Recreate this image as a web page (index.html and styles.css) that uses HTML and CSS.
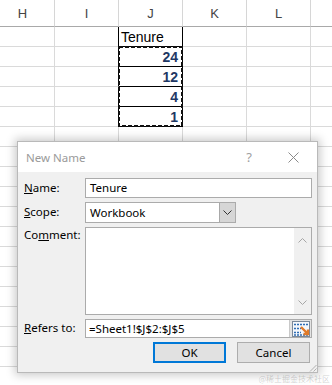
FILE: index.html
```html
<!DOCTYPE html>
<html lang="en">

<head>
    <meta charset="UTF-8">
    <meta name="viewport" content="width=device-width, initial-scale=1.0">
    <title>New Name</title>
    <link rel="stylesheet" href="styles.css">
</head>

<body>
    <!-- sheet grid -->
    <div class="sheet">
        <div class="head">H</div>
        <div class="head">I</div>
        <div class="head">J</div>
        <div class="head">K</div>
        <div class="head">L</div>
        <div class="head"></div>

        <div class="cell"></div>
        <div class="cell edge"></div>
        <div class="cell title-cell">Tenure</div>
        <div class="cell"></div>
        <div class="cell"></div>
        <div class="cell"></div>

        <div class="cell"></div>
        <div class="cell edge"></div>
        <div class="pick">
            <div class="num">24</div>
            <div class="num">12</div>
            <div class="num">4</div>
            <div class="num">1</div>
            <svg class="ants" width="65" height="81" viewBox="0 0 65 81">
                <rect x="1" y="1" width="63" height="79" fill="none" stroke="#111" stroke-width="2" stroke-dasharray="4 2"/>
            </svg>
        </div>
        <div class="cell"></div>
        <div class="cell"></div>
        <div class="cell"></div>

        <div class="cell"></div>
        <div class="cell edge"></div>
        <div class="cell"></div>
        <div class="cell"></div>
        <div class="cell"></div>

        <div class="cell"></div>
        <div class="cell edge"></div>
        <div class="cell"></div>
        <div class="cell"></div>
        <div class="cell"></div>

        <div class="cell"></div>
        <div class="cell edge"></div>
        <div class="cell"></div>
        <div class="cell"></div>
        <div class="cell"></div>

        <!-- empty rows under the dialog -->
        <div class="cell"></div><div class="cell"></div><div class="cell"></div><div class="cell"></div><div class="cell"></div><div class="cell"></div>
        <div class="cell"></div><div class="cell"></div><div class="cell"></div><div class="cell"></div><div class="cell"></div><div class="cell"></div>
        <div class="cell"></div><div class="cell"></div><div class="cell"></div><div class="cell"></div><div class="cell"></div><div class="cell"></div>
        <div class="cell"></div><div class="cell"></div><div class="cell"></div><div class="cell"></div><div class="cell"></div><div class="cell"></div>
        <div class="cell"></div><div class="cell"></div><div class="cell"></div><div class="cell"></div><div class="cell"></div><div class="cell"></div>
        <div class="cell"></div><div class="cell"></div><div class="cell"></div><div class="cell"></div><div class="cell"></div><div class="cell"></div>
        <div class="cell"></div><div class="cell"></div><div class="cell"></div><div class="cell"></div><div class="cell"></div><div class="cell"></div>
        <div class="cell"></div><div class="cell"></div><div class="cell"></div><div class="cell"></div><div class="cell"></div><div class="cell"></div>
        <div class="cell"></div><div class="cell"></div><div class="cell"></div><div class="cell"></div><div class="cell"></div><div class="cell"></div>
        <div class="cell"></div><div class="cell"></div><div class="cell"></div><div class="cell"></div><div class="cell"></div><div class="cell"></div>
        <div class="cell"></div><div class="cell"></div><div class="cell"></div><div class="cell"></div><div class="cell"></div><div class="cell"></div>
        <div class="cell"></div><div class="cell"></div><div class="cell"></div><div class="cell"></div><div class="cell"></div><div class="cell"></div>
    </div>

    <!-- New Name dialog -->
    <div class="dialog">
        <div class="dialog-title">
            <span class="caption">New Name</span>
            <span class="help">?</span>
            <svg class="close" width="11" height="11" viewBox="0 0 11 11">
                <path d="M0.5 0.5 L10.5 10.5 M10.5 0.5 L0.5 10.5" stroke="#8a8a8a" stroke-width="1"/>
            </svg>
        </div>
        <div class="dialog-body">
            <div class="form">
                <label class="lbl"><u>N</u>ame:</label>
                <div class="field">Tenure</div>

                <label class="lbl"><u>S</u>cope:</label>
                <div class="select">
                    <span class="select-text">Workbook</span>
                    <span class="select-btn">
                        <svg width="9" height="6" viewBox="0 0 9 6"><path d="M0.5 0.5 L4.5 4.5 L8.5 0.5" fill="none" stroke="#333" stroke-width="1"/></svg>
                    </span>
                </div>

                <label class="lbl top">Co<u>m</u>ment:</label>
                <div class="memo">
                    <div class="memo-bar">
                        <svg width="9" height="6" viewBox="0 0 9 6"><path d="M0.5 5.5 L4.5 1.5 L8.5 5.5" fill="none" stroke="#a6a6a6" stroke-width="1"/></svg>
                        <svg width="9" height="6" viewBox="0 0 9 6"><path d="M0.5 0.5 L4.5 4.5 L8.5 0.5" fill="none" stroke="#a6a6a6" stroke-width="1"/></svg>
                    </div>
                </div>

                <label class="lbl"><u>R</u>efers to:</label>
                <div class="ref">
                    <span class="ref-text">=Sheet1!$J$2:$J$5</span>
                    <span class="ref-btn">
                        <svg width="18" height="16" viewBox="0 0 18 16">
                            <rect x="0.5" y="0.5" width="17" height="15" fill="#f4f7fb" stroke="#7a8899"/>
                            <path d="M2 3.5 H16 M2 7.5 H9 M2 11.5 H9 M2 14 H16" stroke="#2f6db5" stroke-width="1.4" stroke-dasharray="2 1"/>
                            <path d="M9 6 L16 13 M16 8.5 V13 H11.5" fill="none" stroke="#e07b2a" stroke-width="2.4"/>
                        </svg>
                    </span>
                </div>
            </div>
            <div class="actions">
                <button class="btn default">OK</button>
                <button class="btn">Cancel</button>
            </div>
            <svg class="grip" width="8" height="8" viewBox="0 0 8 8">
                <path d="M7.5 1 L1 7.5 M7.5 4.5 L4.5 7.5" stroke="#b0b0b0" stroke-width="1"/>
            </svg>
        </div>
    </div>

    <div class="mark">@稀土掘金技术社区</div>
</body>

</html>
```

FILE: styles.css
```css
/* global */

*,
 ::after,
 ::before {
    margin: 0;
    padding: 0;
    box-sizing: border-box;
}

body {
    width: 332px;
    height: 385px;
    overflow: hidden;
    background-color: #fff;
    position: relative;
    font-family: "Liberation Sans", Arial, sans-serif;
}
/* sheet grid */

.sheet {
    display: grid;
    grid-template-columns: repeat(6, 64px);
    grid-template-rows: 27px;
    grid-auto-rows: 20px;
    margin-left: -9px;
    width: 384px;
}

.head {
    display: flex;
    align-items: flex-end;
    justify-content: center;
    padding-bottom: 5px;
    font-size: 13px;
    color: #444;
    border-right: 1px solid #d6d6d6;
    border-bottom: 1px solid #a9a9a9;
}

.cell {
    border-right: 1px solid #dadada;
    border-bottom: 1px solid #dadada;
}

.cell.edge {
    border-right-color: #000;
}

.title-cell {
    font-size: 14px;
    line-height: 20px;
    padding-left: 2px;
    color: #000;
    border-right-color: #000;
    border-bottom-color: #000;
}

.pick {
    grid-row: span 4;
    display: grid;
    grid-auto-rows: 20px;
    position: relative;
}

.num {
    text-align: right;
    padding-right: 4px;
    font-size: 14px;
    font-weight: bold;
    line-height: 21px;
    color: #1f3864;
    border-right: 1px solid #000;
    border-bottom: 1px solid #000;
}

.ants {
    position: absolute;
    left: -1px;
    top: -1px;
}
/* dialog */

.dialog {
    position: absolute;
    left: 17px;
    top: 141px;
    width: 301px;
    height: 232px;
    border: 1px solid #b9b9b9;
    background-color: #f0f0f0;
    box-shadow: 0 0 9px 2px rgba(0, 0, 0, 0.22);
    font-family: "Noto Sans", "Open Sans", sans-serif;
    font-size: 11.5px;
    color: #000;
    display: flex;
    flex-direction: column;
}

.dialog-title {
    height: 30px;
    background-color: #fff;
    display: flex;
    align-items: center;
    padding-left: 8px;
    padding-right: 18px;
}

.caption {
    flex: 1;
    color: #9a9a9a;
    font-size: 11.5px;
}

.help {
    color: #a0a0a0;
    font-size: 13px;
    margin-right: 36px;
}

.dialog-body {
    flex: 1;
    position: relative;
    padding: 6px 5px 0 6px;
}

.form {
    display: grid;
    grid-template-columns: 61px 1fr;
    grid-template-rows: 20px 21px 88px 19px;
    row-gap: 4px;
}

.lbl {
    display: flex;
    align-items: center;
    padding-bottom: 2px;
}

.lbl.top {
    align-items: flex-start;
    padding-top: 0;
}

.field {
    background-color: #fff;
    border: 1px solid #ababab;
    padding-left: 4px;
    line-height: 18px;
}

.select {
    width: 151px;
    display: flex;
    background-color: #fff;
    border: 1px solid #ababab;
}

.select-text {
    flex: 1;
    padding-left: 4px;
    line-height: 19px;
}

.select-btn {
    width: 16px;
    display: flex;
    align-items: center;
    justify-content: center;
    background-color: #d6d6d6;
    border-left: 1px solid #a8a8a8;
}

.memo {
    background-color: #fff;
    border: 1px solid #ababab;
    display: flex;
    justify-content: flex-end;
}

.memo-bar {
    width: 17px;
    background-color: #f0f0f0;
    display: flex;
    flex-direction: column;
    justify-content: space-between;
    align-items: center;
    padding: 9px 0 8px;
}

.ref {
    display: flex;
    background-color: #fff;
    border: 1px solid #ababab;
}

.ref-text {
    flex: 1;
    padding-left: 3px;
    line-height: 17px;
}

.ref-btn {
    width: 22px;
    display: flex;
    align-items: center;
    justify-content: center;
    background-color: #e3e3e3;
    border-left: 1px solid #c9c9c9;
}

.actions {
    display: flex;
    justify-content: flex-end;
    gap: 11px;
    margin-top: 4px;
    padding-right: 2px;
}

.btn {
    width: 73px;
    height: 21px;
    font-family: "Noto Sans", "Open Sans", sans-serif;
    font-size: 11.5px;
    color: #000;
    background-color: #e1e1e1;
    border: 1px solid #adadad;
}

.btn.default {
    border: 2px solid #0078d7;
}

.grip {
    position: absolute;
    right: 0;
    bottom: 0;
}

.mark {
    position: absolute;
    right: 2px;
    bottom: 1px;
    font-family: "Noto Sans CJK SC", sans-serif;
    font-size: 8px;
    color: rgba(0, 0, 0, 0.18);
}
```
